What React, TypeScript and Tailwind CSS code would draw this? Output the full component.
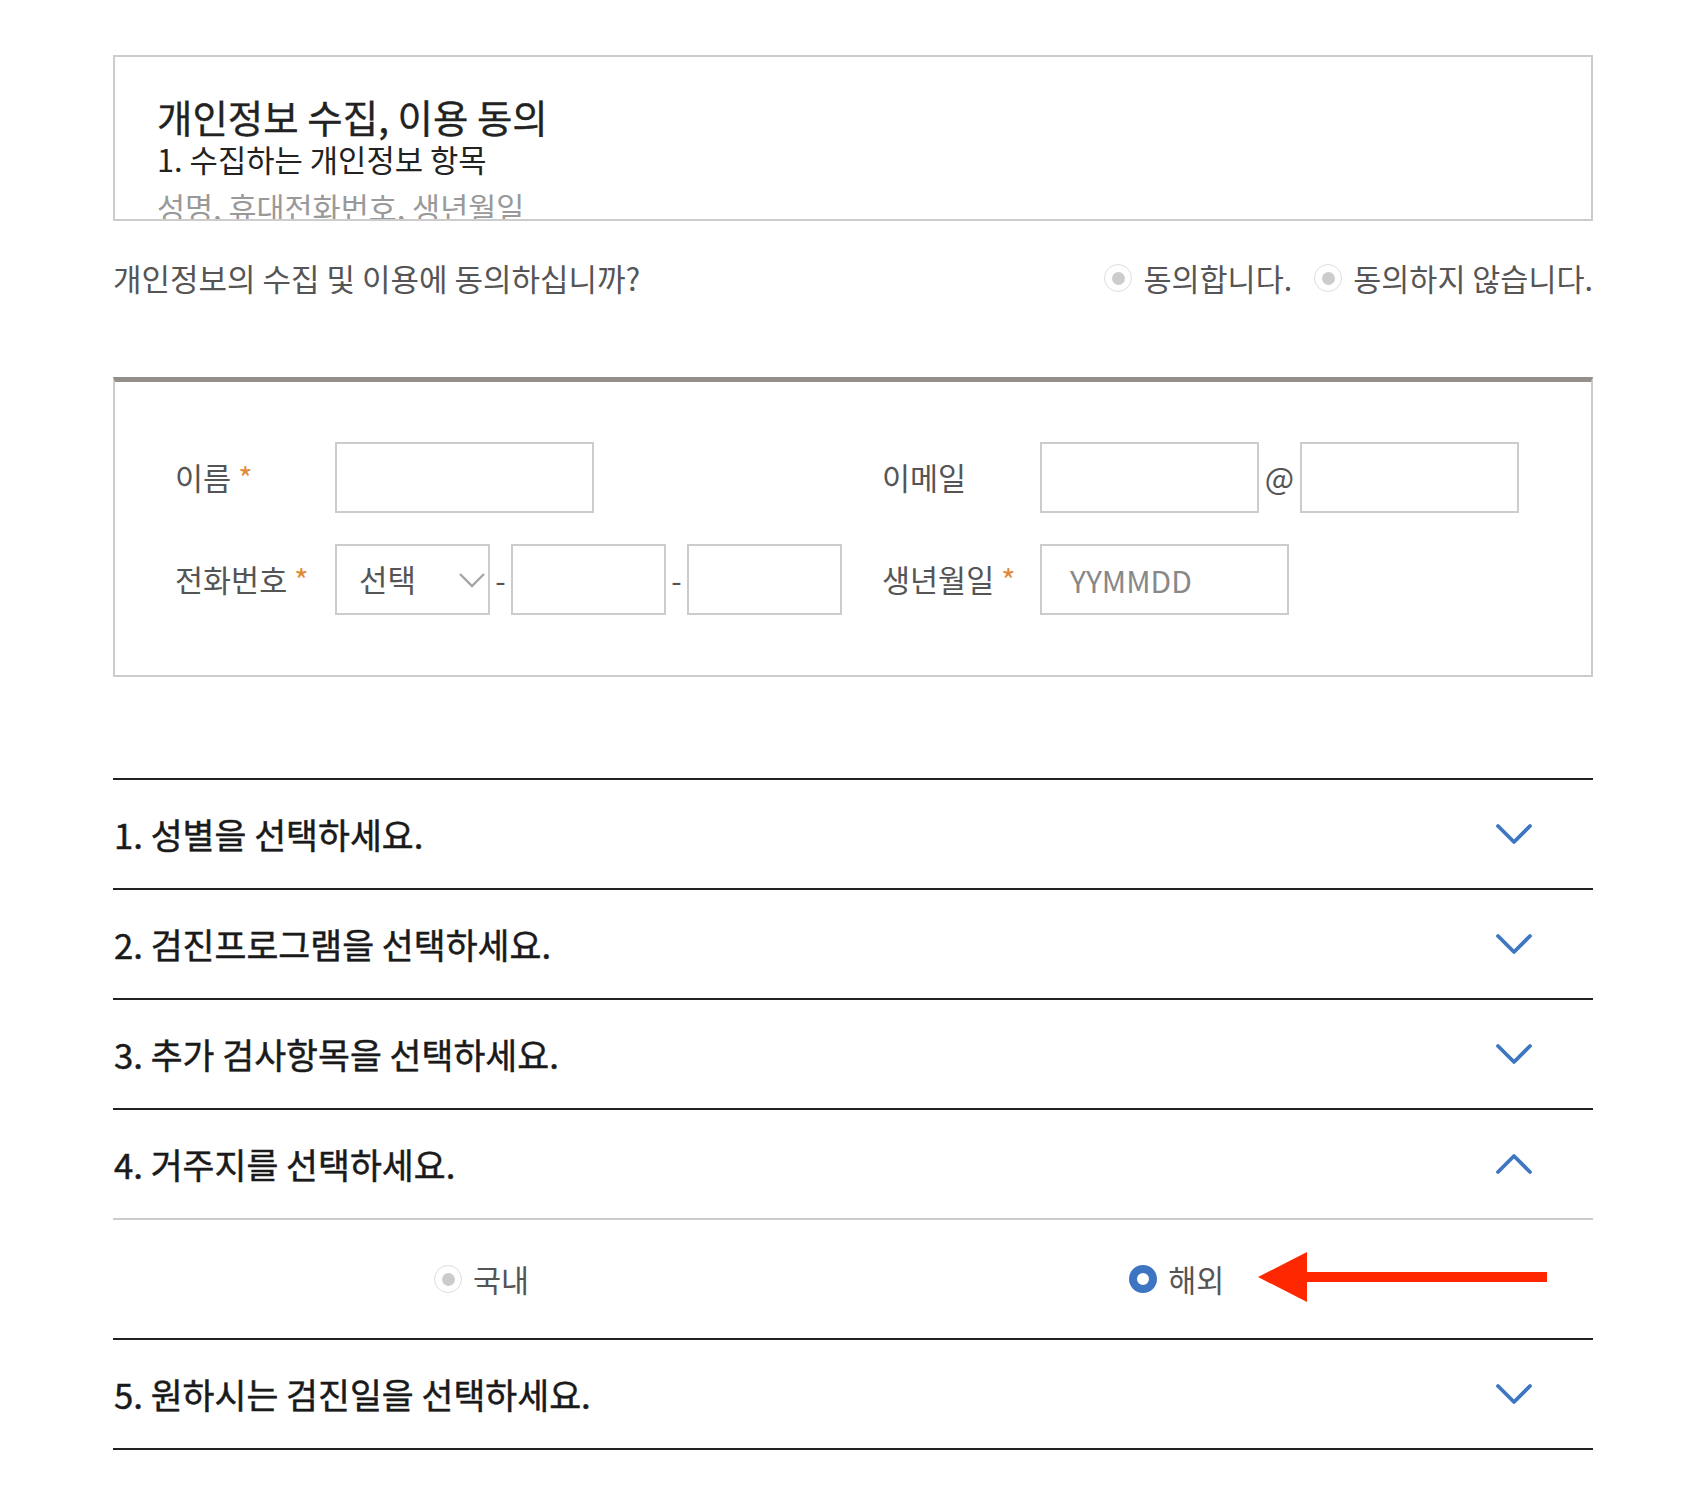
import type { ReactNode } from "react"

function ChevronDown({ up = false }: { up?: boolean }) {
  return (
    <svg width="38" height="22" viewBox="0 0 38 22" className={up ? "rotate-180" : ""} aria-hidden>
      <path d="M3 3 L19 19 L35 3" fill="none" stroke="#3e76c2" strokeWidth="3.8" strokeLinecap="round" strokeLinejoin="round" />
    </svg>
  )
}

function Radio({ checked = false, label }: { checked?: boolean; label: string }) {
  return (
    <label className="flex items-center gap-[11px] text-[30.5px] text-[#555]">
      {checked ? (
        <span className="size-[28px] rounded-full border-[8px] border-[#3d75c3] bg-white" />
      ) : (
        <span className="flex size-[28px] items-center justify-center rounded-full border border-[#ddd] bg-white">
          <span className="size-[13px] rounded-full bg-[#ccc]" />
        </span>
      )}
      <span className="leading-none">{label}</span>
    </label>
  )
}

function Label({ w, text, required }: { w: string; text: string; required?: boolean }) {
  return (
    <div className={`${w} text-[30.5px] text-[#555]`}>
      {text}
      {required && <span className="ml-[7px] text-[#e08a3a]">*</span>}
    </div>
  )
}

function Box({ w, placeholder }: { w: string; placeholder?: string }) {
  return (
    <input
      placeholder={placeholder}
      className={`${w} h-[71px] border-2 border-[#ccc] bg-white px-[28px] text-[30px] text-[#333] outline-none placeholder:text-[#888]`}
    />
  )
}

function Sep({ children }: { children: ReactNode }) {
  return <span className="flex w-[21px] justify-center text-[30px] text-[#555]">{children}</span>
}

const sections = [
  { title: "1. 성별을 선택하세요." },
  { title: "2. 검진프로그램을 선택하세요." },
  { title: "3. 추가 검사항목을 선택하세요." },
  { title: "4. 거주지를 선택하세요.", open: true },
  { title: "5. 원하시는 검진일을 선택하세요." },
]

export default function App() {
  return (
    <div className="min-h-[1498px] bg-white font-['Noto_Sans_CJK_KR','Noto_Sans',sans-serif]">
      <div className="mx-auto w-[1480px] pt-[55px]">
        {/* consent scroll box */}
        <div className="h-[166px] overflow-hidden border-2 border-[#ccc] pl-[42px] pt-[36px]">
          <h2 className="text-[38.5px] leading-[46px] text-[#222] [-webkit-text-stroke:0.35px_#222]">
            개인정보 수집, 이용 동의
          </h2>
          <p className="text-[30.8px] leading-[40px] text-[#222]">1. 수집하는 개인정보 항목</p>
          <p className="mt-[8px] text-[30.5px] leading-[40px] text-[#999]">성명, 휴대전화번호, 생년월일</p>
        </div>

        <div className="mt-[29px] flex h-[56px] items-center justify-between">
          <p className="text-[31px] text-[#555]">개인정보의 수집 및 이용에 동의하십니까?</p>
          <div className="flex items-center gap-[22px]">
            <Radio label="동의합니다." />
            <Radio label="동의하지 않습니다." />
          </div>
        </div>

        {/* applicant info */}
        <div className="mt-[71px] border-2 border-t-[5px] border-[#ccc] border-t-[#948f88] px-[60px] py-[60px]">
          <div className="grid grid-cols-[707px_1fr] gap-y-[31px]">
            <div className="flex h-[71px] items-center">
              <Label w="w-[160px]" text="이름" required />
              <Box w="w-[259px]" />
            </div>
            <div className="flex h-[71px] items-center">
              <Label w="w-[158px]" text="이메일" />
              <Box w="w-[219px]" />
              <span className="flex w-[41px] justify-center text-[31px] text-[#555]">@</span>
              <Box w="w-[219px]" />
            </div>
            <div className="flex h-[71px] items-center">
              <Label w="w-[160px]" text="전화번호" required />
              <div className="flex h-[71px] w-[155px] items-center justify-between border-2 border-[#ccc] pr-[2px] pl-[22px] text-[31px] text-[#555]">
                <span>선택</span>
                <svg width="28" height="18" viewBox="0 0 28 18" aria-hidden>
                  <path d="M2 3 L14 15 L26 3" fill="none" stroke="#a5a5a5" strokeWidth="2.4" />
                </svg>
              </div>
              <Sep>-</Sep>
              <Box w="w-[155px]" />
              <Sep>-</Sep>
              <Box w="w-[155px]" />
            </div>
            <div className="flex h-[71px] items-center">
              <Label w="w-[158px]" text="생년월일" required />
              <Box w="w-[249px]" placeholder="YYMMDD" />
            </div>
          </div>
        </div>

        {/* steps */}
        <div className="mt-[101px] border-b-2 border-[#222]">
          {sections.map((s) => (
            <div key={s.title} className="border-t-2 border-[#222]">
              <div className="flex h-[108px] items-center justify-between pr-[60px] pl-px">
                <span className="text-[34.7px] text-[#1a1a1a] [-webkit-text-stroke:0.5px_#1a1a1a]">{s.title}</span>
                <ChevronDown up={s.open} />
              </div>
              {s.open && (
                <div className="relative flex h-[120px] items-center border-t-2 border-[#ccc] pl-[321px]">
                  <Radio label="국내" />
                  <div className="ml-[600px]">
                    <Radio checked label="해외" />
                  </div>
                  <svg
                    className="absolute top-[32px] left-[1145px]"
                    width="290"
                    height="50"
                    viewBox="0 0 290 50"
                    aria-hidden
                  >
                    <polygon points="0,25 49,0 49,50" fill="#ff2700" />
                    <rect x="48" y="20" width="241" height="10" fill="#ff2700" />
                  </svg>
                </div>
              )}
            </div>
          ))}
        </div>
      </div>
    </div>
  )
}
